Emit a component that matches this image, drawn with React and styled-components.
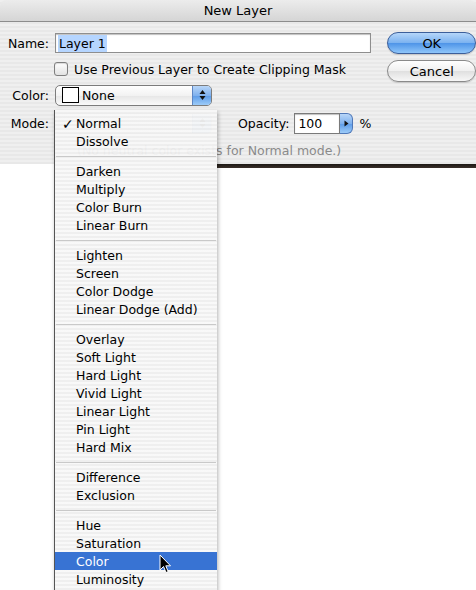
import styled, { createGlobalStyle } from "styled-components";

const Global = createGlobalStyle`
    html, body {
        margin: 0;
        padding: 0;
        background: #fff;
        overflow: hidden;
    }
    body {
        font-family: "DejaVu Sans", "Liberation Sans", sans-serif;
        font-size: 12.5px;
        color: #000;
    }
`;

const Page = styled.div`
    position: relative;
    width: 476px;
    height: 590px;
    overflow: hidden;
`;

const Dialog = styled.div`
    width: 476px;
    height: 164px;
    background: repeating-linear-gradient(to bottom, #efefef 0px, #efefef 2px, #e8e8e8 2px, #e8e8e8 4px);
`;

const Backdrop = styled.div`
    margin-left: 217px;
    height: 4px;
    background: linear-gradient(to bottom, #1d1915, #3a302a);
`;

const TitleBar = styled.div`
    height: 21px;
    border-top-left-radius: 6px;
    border-top-right-radius: 6px;
    background: linear-gradient(to bottom, #ececec, #d5d5d5);
    border-bottom: 1px solid #8c8c8c;
    display: flex;
    align-items: center;
    justify-content: center;
    font-size: 13px;
`;

const Body = styled.div`
    display: grid;
    grid-template-columns: 1fr 89px;
    column-gap: 16px;
    padding: 10px 7px 0 6px;
`;

const Fields = styled.div`
    display: flex;
    flex-direction: column;
`;

const Row = styled.div`
    height: 22px;
    display: flex;
    align-items: center;
    margin-top: ${p => p.$gap || 0}px;
    padding-left: ${p => p.$indent || 0}px;
`;

const Label = styled.span`
    width: 43px;
    text-align: right;
    margin-right: 6px;
    flex-shrink: 0;
`;

const TextField = styled.div`
    flex: 1;
    height: 18px;
    background: #fff;
    border: 1px solid #8e8e8e;
    box-shadow: inset 0 1px 1px rgba(0, 0, 0, 0.25);
    display: flex;
    align-items: center;
    padding-left: 2px;
`;

const Selected = styled.span`
    background: #b5d5ff;
    padding: 1px 1px;
`;

const Checkbox = styled.span`
    width: 12px;
    height: 12px;
    border: 1px solid #7f7f7f;
    border-radius: 3px;
    background: linear-gradient(to bottom, #ffffff, #e2e2e2);
    margin-right: 6px;
    box-shadow: inset 0 1px 1px rgba(0, 0, 0, 0.15);
`;

const Popup = styled.div`
    width: 155px;
    height: 19px;
    border: 1px solid ${p => (p.$dim ? "#b8b8b8" : "#7c7c7c")};
    border-radius: 5px;
    background: linear-gradient(to bottom, #ffffff 0%, #f2f2f2 50%, #e6e6e6 51%, #fafafa 100%);
    display: flex;
    align-items: center;
    overflow: hidden;
    opacity: ${p => (p.$dim ? 0.6 : 1)};
`;

const Swatch = styled.span`
    width: 15px;
    height: 14px;
    border: 1px solid #000;
    background: #fff;
    margin: 0 3px 0 6px;
`;

const PopupText = styled.span`
    flex: 1;
`;

const Arrows = styled.span`
    width: 18px;
    height: 100%;
    border-left: 1px solid #5d86c4;
    background: linear-gradient(to bottom, #b8d6f8 0%, #7fb1ee 50%, #5c9be8 51%, #9ccbf8 100%);
    display: flex;
    align-items: center;
    justify-content: center;
`;

const OpacityLabel = styled.span`
    margin-left: 26px;
    margin-right: 5px;
`;

const SmallField = styled.div`
    width: 41px;
    height: 19px;
    background: #fff;
    border: 1px solid #7a7a7a;
    box-shadow: inset 0 1px 1px rgba(0, 0, 0, 0.25);
    display: flex;
    align-items: center;
    padding-left: 3px;
`;

const Stepper = styled.span`
    width: 12px;
    height: 19px;
    border: 1px solid #4f78b8;
    border-left: none;
    border-radius: 0 6px 6px 0;
    background: linear-gradient(to bottom, #b8d6f8 0%, #7fb1ee 50%, #5c9be8 51%, #9ccbf8 100%);
    display: flex;
    align-items: center;
    justify-content: center;
    margin-right: 6px;
`;

const Hint = styled.div`
    margin-top: 5px;
    height: 22px;
    display: flex;
    align-items: center;
    padding-left: 71px;
    color: #8a8a8a;
`;

const Buttons = styled.div`
    display: flex;
    flex-direction: column;
    gap: 6px;
`;

const Button = styled.button`
    height: 22px;
    width: 89px;
    border-radius: 11px;
    font-family: inherit;
    font-size: 13px;
    color: #000;
    padding: 0;
    border: 1px solid ${p => (p.$primary ? "#3c5f9a" : "#8a8a8a")};
    background: ${p =>
        p.$primary
            ? "linear-gradient(to bottom, #b5d6f9 0%, #7db3f0 48%, #4f95e8 52%, #8fc6fa 100%)"
            : "linear-gradient(to bottom, #ffffff 0%, #f0f0f0 48%, #e0e0e0 52%, #f7f7f7 100%)"};
    box-shadow: 0 1px 1px rgba(0, 0, 0, 0.15);
`;

const Menu = styled.div`
    position: absolute;
    left: 54px;
    top: 110px;
    width: 162px;
    padding: 4px 0;
    background: repeating-linear-gradient(to bottom, rgba(248, 248, 248, 0.94) 0px, rgba(248, 248, 248, 0.94) 2px, rgba(238, 238, 238, 0.94) 2px, rgba(238, 238, 238, 0.94) 4px);
    border-left: 1px solid #555;
    box-shadow: 1px 2px 4px rgba(0, 0, 0, 0.3);
`;

const Item = styled.div`
    box-sizing: border-box;
    height: 18px;
    padding-top: 1px;
    display: flex;
    align-items: center;
    padding-left: 7px;
    background: ${p => (p.$active ? "#3873d3" : "transparent")};
    color: ${p => (p.$active ? "#fff" : "#000")};
`;

const Check = styled.span`
    width: 14px;
    font-size: 14px;
    font-weight: bold;
`;

const Separator = styled.div`
    height: 12px;
    display: flex;
    align-items: center;
    padding: 0 1px;

    &::after {
        content: "";
        flex: 1;
        height: 1px;
        background: #c9c9c9;
    }
`;

const Cursor = styled.svg`
    position: absolute;
    left: 159px;
    top: 554px;
`;

const groups = [
    ["Normal", "Dissolve"],
    ["Darken", "Multiply", "Color Burn", "Linear Burn"],
    ["Lighten", "Screen", "Color Dodge", "Linear Dodge (Add)"],
    ["Overlay", "Soft Light", "Hard Light", "Vivid Light", "Linear Light", "Pin Light", "Hard Mix"],
    ["Difference", "Exclusion"],
    ["Hue", "Saturation", "Color", "Luminosity"],
];

const UpDown = () => (
    <svg width="7" height="12" viewBox="0 0 7 12">
        <path d="M3.5 1 L6.5 5 L0.5 5 Z M3.5 11 L6.5 7 L0.5 7 Z" fill="#111" />
    </svg>
);

const App = () => {
    return (
        <Page>
            <Global />
            <Dialog>
                <TitleBar>New Layer</TitleBar>
                <Body>
                    <Fields>
                        <Row>
                            <Label>Name:</Label>
                            <TextField>
                                <Selected>Layer 1</Selected>
                            </TextField>
                        </Row>
                        <Row $gap={4} $indent={48}>
                            <Checkbox />
                            Use Previous Layer to Create Clipping Mask
                        </Row>
                        <Row $gap={4}>
                            <Label>Color:</Label>
                            <Popup>
                                <Swatch />
                                <PopupText>None</PopupText>
                                <Arrows>
                                    <UpDown />
                                </Arrows>
                            </Popup>
                        </Row>
                        <Row $gap={6}>
                            <Label>Mode:</Label>
                            <Popup $dim>
                                <PopupText />
                                <Arrows>
                                    <UpDown />
                                </Arrows>
                            </Popup>
                            <OpacityLabel>Opacity:</OpacityLabel>
                            <SmallField>100</SmallField>
                            <Stepper>
                                <svg width="5" height="7" viewBox="0 0 5 7">
                                    <path d="M0.5 0.5 L4.5 3.5 L0.5 6.5 Z" fill="#111" />
                                </svg>
                            </Stepper>
                            %
                        </Row>
                        <Hint>(No neutral color exists for Normal mode.)</Hint>
                    </Fields>
                    <Buttons>
                        <Button $primary>OK</Button>
                        <Button>Cancel</Button>
                    </Buttons>
                </Body>
            </Dialog>
            <Backdrop />
            <Menu>
                {groups.map((group, gi) => (
                    <div key={gi}>
                        {gi > 0 && <Separator />}
                        {group.map(name => (
                            <Item key={name} $active={name === "Color"}>
                                <Check>{name === "Normal" ? "✓" : ""}</Check>
                                {name}
                            </Item>
                        ))}
                    </div>
                ))}
            </Menu>
            <Cursor width="13" height="20" viewBox="0 0 13 20">
                <path d="M1 1 L1 16 L4.5 12.5 L7 18.5 L9.2 17.6 L6.8 11.8 L11.5 11.8 Z" fill="#000" stroke="#fff" strokeWidth="1" />
            </Cursor>
        </Page>
    );
};

export default App;
